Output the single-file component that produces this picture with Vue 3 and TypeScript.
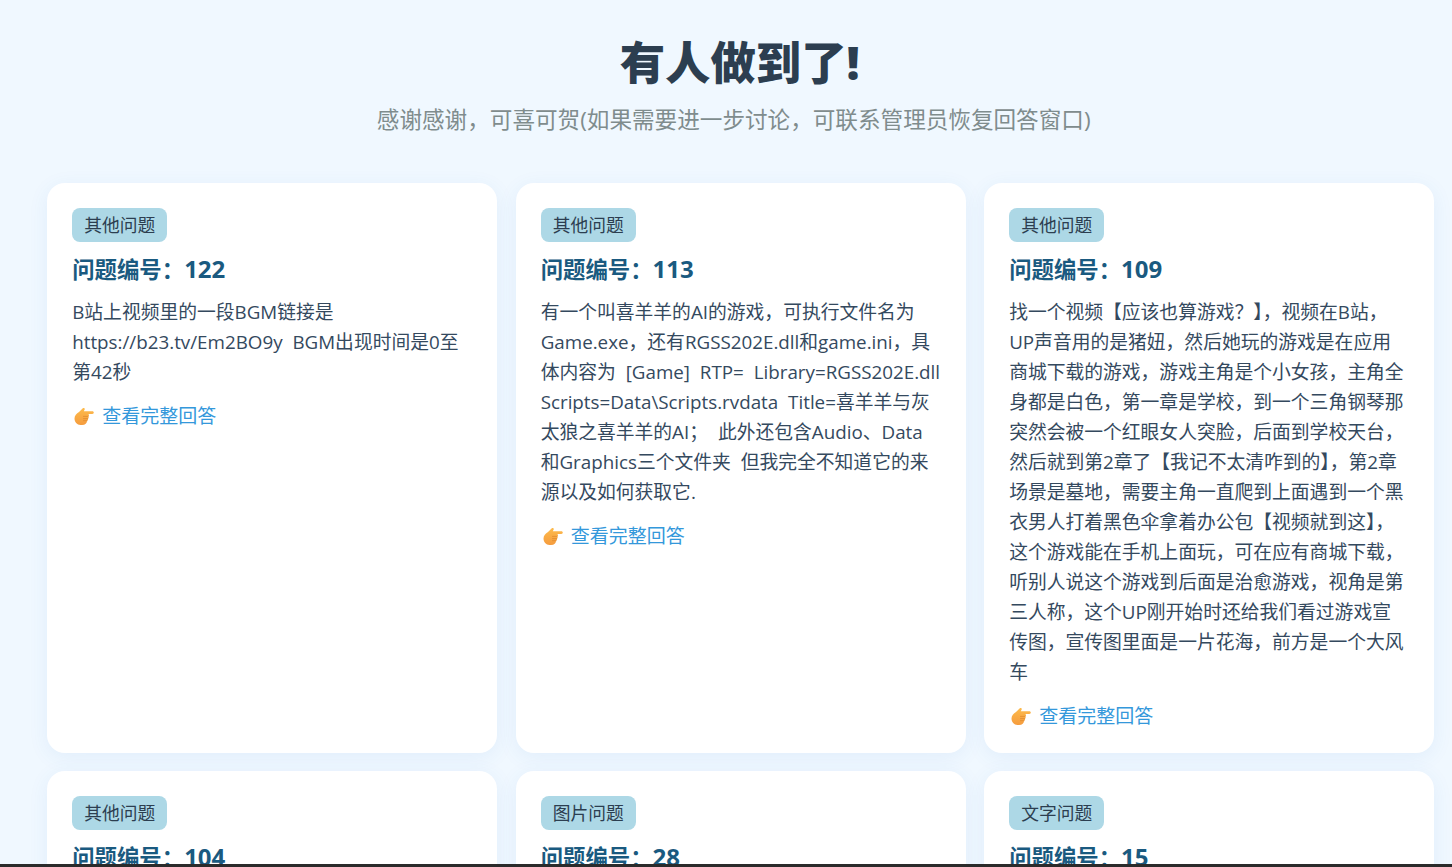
<template>
  <main class="page">
    <header class="hero">
      <h1>有人做到了!</h1>
      <p>感谢感谢，可喜可贺(如果需要进一步讨论，可联系管理员恢复回答窗口)</p>
    </header>

    <section class="grid">
      <article v-for="item in questions" :key="item.id" class="card">
        <span class="tag">{{ item.tag }}</span>
        <h2>问题编号：<span class="num">{{ item.id }}</span></h2>
        <template v-if="item.text">
          <p class="text">{{ item.text }}</p>
          <a class="more" href="#">
            <svg class="hand" viewBox="0 0 20 20" aria-hidden="true">
              <defs>
                <linearGradient id="handFill" x1="0" y1="0" x2="0" y2="1">
                  <stop offset="0" stop-color="#fdbb4c" />
                  <stop offset="1" stop-color="#f59c3e" />
                </linearGradient>
              </defs>
              <path
                fill="url(#handFill)"
                d="M0.500 12.500C0.500 9.500 2.500 7.500 5 6L8.800 2.300C9.900 1.400 11.300 2.500 10.600 3.800L9.800 5.200H18.300C20.300 5.200 20.300 8 18.300 8H14.200C15.300 8.400 15.300 10 14.300 10.400C15 11 14.800 12.300 13.900 12.600C14.300 13.400 13.800 14.500 13 14.700C13 17 11.300 19 8 19H6.500C3 19 0.500 16 0.500 12.500Z"
              />
              <path
                fill="none"
                stroke="#e08a2e"
                stroke-width="0.8"
                stroke-linecap="round"
                d="M9.500 10.400H14M9.500 12.600H13.800M9.500 14.700H13"
              />
            </svg>
            查看完整回答
          </a>
        </template>
      </article>
    </section>

    <div class="bottom-bar"></div>
  </main>
</template>

<script setup lang="ts">
interface Question {
  id: number;
  tag: string;
  text?: string;
}

const questions: Question[] = [
  {
    id: 122,
    tag: "其他问题",
    text: "B站上视频里的一段BGM链接是 https://b23.tv/Em2BO9y BGM出现时间是0至第42秒",
  },
  {
    id: 113,
    tag: "其他问题",
    text: "有一个叫喜羊羊的AI的游戏，可执行文件名为Game.exe，还有RGSS202E.dll和game.ini，具体内容为 [Game] RTP= Library=RGSS202E.dll Scripts=Data\\Scripts.rvdata Title=喜羊羊与灰太狼之喜羊羊的AI； 此外还包含Audio、Data和Graphics三个文件夹 但我完全不知道它的来源以及如何获取它.",
  },
  {
    id: 109,
    tag: "其他问题",
    text: "找一个视频【应该也算游戏？】，视频在B站，UP声音用的是猪妞，然后她玩的游戏是在应用商城下载的游戏，游戏主角是个小女孩，主角全身都是白色，第一章是学校，到一个三角钢琴那突然会被一个红眼女人突脸，后面到学校天台，然后就到第2章了【我记不太清咋到的】，第2章场景是墓地，需要主角一直爬到上面遇到一个黑衣男人打着黑色伞拿着办公包【视频就到这】，这个游戏能在手机上面玩，可在应有商城下载，听别人说这个游戏到后面是治愈游戏，视角是第三人称，这个UP刚开始时还给我们看过游戏宣传图，宣传图里面是一片花海，前方是一个大风车",
  },
  { id: 104, tag: "其他问题" },
  { id: 28, tag: "图片问题" },
  { id: 15, tag: "文字问题" },
];
</script>

<style>
html,
body {
  margin: 0;
  background: #f0f8ff;
}
</style>

<style scoped>
.page {
  height: 100vh;
  overflow: hidden;
  box-sizing: border-box;
  padding: 0 17.8px 0 47.2px;
  background: #f0f8ff;
  color: #2c3e50;
  font-family: "Open Sans", "Noto Sans CJK SC", sans-serif;
}

.hero {
  padding-top: 32px;
  margin-bottom: 48px;
  text-align: center;
}

.hero h1 {
  margin: 0 0 13px;
  padding-right: 2px;
  font-size: 45.4px;
  line-height: 60px;
  font-weight: 900;
  color: #2c3e50;
}

.hero p {
  margin: 0;
  padding-right: 14px;
  font-size: 22.6px;
  line-height: 30px;
  color: #7f8c8d;
}

.grid {
  display: grid;
  grid-template-columns: repeat(3, 1fr);
  gap: 18.4px;
}

.card {
  min-height: 520px;
  padding: 25px 25px 22px;
  background: #fff;
  border-radius: 18px;
  box-shadow: 0 4px 20px rgb(52 120 200 / 8%);
}

.tag {
  display: inline-block;
  padding: 0 12px;
  font-size: 17.8px;
  line-height: 34px;
  border-radius: 8px;
  background: #add8e6;
  color: #2c3e50;
  vertical-align: top;
}

.card h2 {
  margin: 9px 0 9px;
  font-size: 22.4px;
  line-height: 36px;
  font-weight: 700;
  color: #1a5a80;
}

.num {
  font-size: 24px;
}

.text {
  margin: 0;
  font-size: 18.8px;
  line-height: 30px;
  word-spacing: 5px;
  color: #34495e;
}

.more {
  display: flex;
  align-items: center;
  gap: 8px;
  margin-top: 14px;
  font-size: 19px;
  line-height: 30px;
  color: #3498db;
  text-decoration: none;
}

.hand {
  width: 20px;
  height: 20px;
  margin-left: 2px;
  flex: none;
}

.bottom-bar {
  position: fixed;
  left: 0;
  right: 0;
  bottom: 0;
  height: 3px;
  background: #2b2b2b;
}
</style>
